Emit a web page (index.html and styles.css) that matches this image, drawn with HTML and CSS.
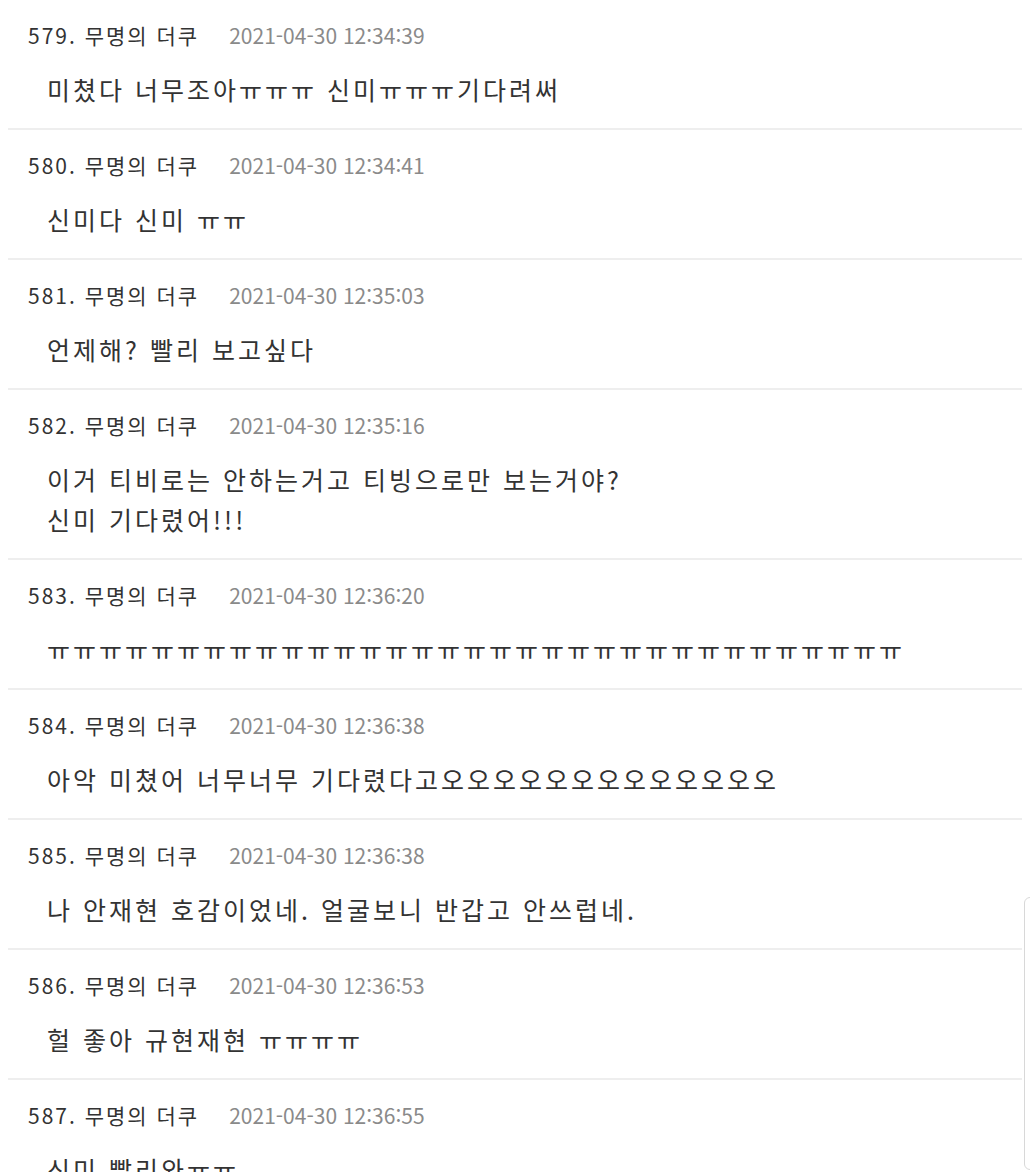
FILE: index.html
```html
<!DOCTYPE html>
<html lang="ko">
<head>
<meta charset="utf-8">
<link rel="stylesheet" href="styles.css">
</head>
<body>
<ul class="comments">
  <li class="comment">
    <div class="meta"><span class="author">579. 무명의 더쿠</span><span class="date">2021-04-30 12:34:39</span></div>
    <div class="text">미쳤다 너무조아ㅠㅠㅠ 신미ㅠㅠㅠ기다려써</div>
  </li>
  <li class="comment">
    <div class="meta"><span class="author">580. 무명의 더쿠</span><span class="date">2021-04-30 12:34:41</span></div>
    <div class="text">신미다 신미 ㅠㅠ</div>
  </li>
  <li class="comment">
    <div class="meta"><span class="author">581. 무명의 더쿠</span><span class="date">2021-04-30 12:35:03</span></div>
    <div class="text">언제해? 빨리 보고싶다</div>
  </li>
  <li class="comment">
    <div class="meta"><span class="author">582. 무명의 더쿠</span><span class="date">2021-04-30 12:35:16</span></div>
    <div class="text">이거 티비로는 안하는거고 티빙으로만 보는거야?<br>신미 기다렸어!!!</div>
  </li>
  <li class="comment">
    <div class="meta"><span class="author">583. 무명의 더쿠</span><span class="date">2021-04-30 12:36:20</span></div>
    <div class="text">ㅠㅠㅠㅠㅠㅠㅠㅠㅠㅠㅠㅠㅠㅠㅠㅠㅠㅠㅠㅠㅠㅠㅠㅠㅠㅠㅠㅠㅠㅠㅠㅠㅠ</div>
  </li>
  <li class="comment">
    <div class="meta"><span class="author">584. 무명의 더쿠</span><span class="date">2021-04-30 12:36:38</span></div>
    <div class="text">아악 미쳤어 너무너무 기다렸다고오오오오오오오오오오오오오</div>
  </li>
  <li class="comment">
    <div class="meta"><span class="author">585. 무명의 더쿠</span><span class="date">2021-04-30 12:36:38</span></div>
    <div class="text">나 안재현 호감이었네. 얼굴보니 반갑고 안쓰럽네.</div>
  </li>
  <li class="comment">
    <div class="meta"><span class="author">586. 무명의 더쿠</span><span class="date">2021-04-30 12:36:53</span></div>
    <div class="text">헐 좋아 규현재현 ㅠㅠㅠㅠ</div>
  </li>
  <li class="comment">
    <div class="meta"><span class="author">587. 무명의 더쿠</span><span class="date">2021-04-30 12:36:55</span></div>
    <div class="text">신미 빨리와ㅠㅠ</div>
  </li>
</ul>
<div class="side-panel"></div>
</body>
</html>
```
FILE: styles.css
```css
html, body {
  margin: 0;
  padding: 0;
  background: #fff;
  overflow: hidden;
}
body {
  padding: 0 8px;
  font-family: "Noto Sans CJK KR", "Noto Sans", sans-serif;
  color: #333;
}
.comments {
  list-style: none;
  margin: 0;
  padding: 0;
}
.comment {
  padding: 20px 20px 19px;
  border-bottom: 2px solid #eeeeee;
}
.meta {
  display: flex;
  align-items: center;
  height: 30px;
  line-height: 30px;
  font-size: 21px;
}
.author {
  color: #333;
  letter-spacing: 2px;
}
.date {
  margin-left: 30px;
  color: #8a8a8a;
}
.text {
  margin-top: 19px;
  padding-left: 19px;
  font-size: 25px;
  line-height: 40px;
  letter-spacing: 3px;
  white-space: nowrap;
}
.side-panel {
  position: fixed;
  left: 1024px;
  top: 897px;
  width: 40px;
  height: 271px;
  border: 1px solid #d8d8d8;
  border-radius: 6px;
  background: #fff;
}
```
